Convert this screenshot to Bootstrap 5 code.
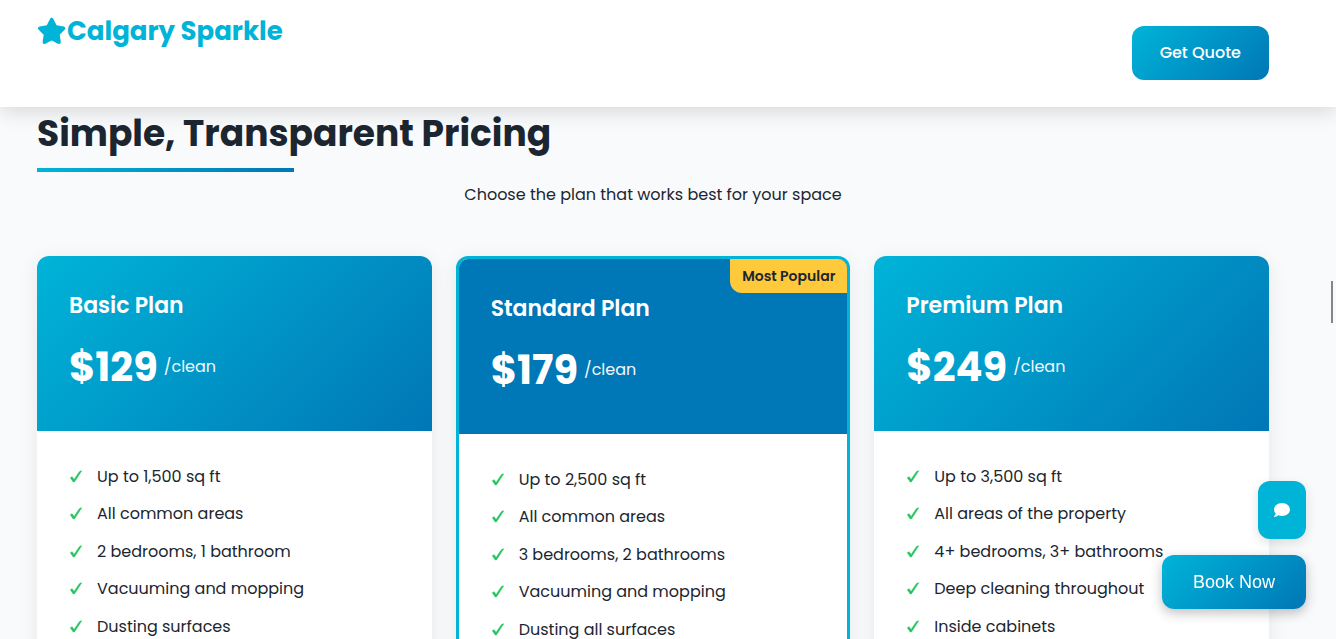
<!DOCTYPE html>
<html lang="en">
<head>
<meta charset="utf-8">
<meta name="viewport" content="width=device-width, initial-scale=1">
<title>Calgary Sparkle</title>
<link href="https://cdn.jsdelivr.net/npm/bootstrap@5.3.0/dist/css/bootstrap.min.css" rel="stylesheet">
<style>
:root { --aqua: #00b4d8; --deep: #0077b6; --ink: #1b2630; --grad: linear-gradient(135deg, var(--aqua), var(--deep)); }
body { font-family: Poppins, Inter, "Open Sans", sans-serif; font-size: 16px; line-height: 26px; color: var(--ink); background: #f9fafc; height: 100vh; overflow: hidden; }
.gutters { padding-left: 37px; padding-right: 67px; }
.site-header { background: #fff; padding-top: 16px; padding-bottom: 27px; box-shadow: 0 4px 20px rgba(0,0,0,.15); z-index: 5; }
.brand { color: var(--aqua); font-size: 26px; font-weight: 700; line-height: 30px; }
.grad-btn, .grad-btn:hover { background: var(--grad); color: #fff; border: 0; border-radius: 12px; }
.quote-btn { font-size: 16px; font-weight: 500; line-height: 22px; padding: 16px 28px; margin-top: 10px; }
.section-title { font-size: 36px; font-weight: 700; line-height: 44px; width: fit-content; margin: 5px 0 0; padding-bottom: 16px; }
.section-title::after { content: ""; position: absolute; left: 0; bottom: 0; width: 50%; height: 4px; background: var(--grad); }
.subtitle { padding-top: 10px; margin-bottom: 48px; }
.plan { height: 100%; background: #fff; border-radius: 12px; overflow: hidden; box-shadow: 0 4px 20px rgba(0,0,0,.08); }
.plan-top { background: var(--grad); color: #fff; padding: 32px; }
.plan-name { font-size: 22px; font-weight: 600; line-height: 35px; margin-bottom: 12px; }
.price { font-size: 40px; font-weight: 700; line-height: 64px; gap: 6px; }
.per { font-size: 16px; opacity: .95; }
.featured { border: 3px solid var(--aqua); }
.featured .plan-top { background: var(--deep); }
.popular { background: #ffc93c; color: var(--ink); font-size: 14px; font-weight: 600; line-height: 18px; padding: 8px 12px; border-radius: 0 0 0 12px; }
.features { padding: 33px 32px 32px; }
.features li { gap: 14px; padding-bottom: 12px; }
.features li:nth-child(odd) { padding-bottom: 11px; }
.tick { width: 14px; height: 14px; padding-bottom: 1px; fill: #22c55e; stroke: #22c55e; stroke-width: .5; flex: none; }
.floaters { right: 30px; bottom: 30px; z-index: 6; }
.chat-btn, .chat-btn:hover { background: var(--aqua); width: 48px; height: 58px; border: 0; border-radius: 12px; box-shadow: 0 4px 12px rgba(0,0,0,.12); }
.book-btn, .book-btn:hover { font: 18px/22px "Liberation Sans", Arial, sans-serif; padding: 16px 31px; box-shadow: 0 4px 12px rgba(0,0,0,.25); }
.scroll-mark { right: 3px; top: 281px; width: 2px; height: 42px; background: #858585; }
</style>
</head>
<body>
<svg class="d-none"><symbol id="tick" viewBox="0 0 14 14"><path d="M.8 8.3 2.9 7.2 4.9 10.200 10.200 2.300Q11.200 1 13.200.900L5.700 12.300Q5 13.400 4 12.900Z"/></symbol></svg>
<header class="site-header gutters position-relative d-flex justify-content-between align-items-start">
  <a href="#" class="brand d-flex align-items-center text-decoration-none">
    <svg width="30" height="28" viewBox="0 0 30 28" fill="currentColor" aria-hidden="true"><path d="M13 2Q14.700-1 16.400 2L19.600 8.300 26.700 9.400Q29.700 10.300 27.600 12.700L22.700 17.800 23.800 24.800Q23.800 27.800 21 26.800L14.700 23.500 8.300 26.800Q5.500 27.800 5.600 24.800L6.700 17.800 1.700 12.700Q-.3 10.300 2.700 9.400L9.800 8.300Z"/></svg>
    <span>Calgary Sparkle</span>
  </a>
  <button type="button" class="btn grad-btn quote-btn">Get Quote</button>
</header>
<main class="gutters">
  <h2 class="section-title position-relative">Simple, Transparent Pricing</h2>
  <p class="text-center subtitle">Choose the plan that works best for your space</p>
  <div class="row gx-4">
    <div class="col-4">
      <article class="plan">
        <div class="plan-top"><h3 class="plan-name">Basic Plan</h3><div class="price d-flex align-items-center"><span>$129</span><span class="per fw-normal">/clean</span></div></div>
        <ul class="features list-unstyled mb-0">
          <li class="d-flex align-items-center"><svg class="tick"><use href="#tick"/></svg>Up to 1,500 sq ft</li>
          <li class="d-flex align-items-center"><svg class="tick"><use href="#tick"/></svg>All common areas</li>
          <li class="d-flex align-items-center"><svg class="tick"><use href="#tick"/></svg>2 bedrooms, 1 bathroom</li>
          <li class="d-flex align-items-center"><svg class="tick"><use href="#tick"/></svg>Vacuuming and mopping</li>
          <li class="d-flex align-items-center"><svg class="tick"><use href="#tick"/></svg>Dusting surfaces</li>
        </ul>
      </article>
    </div>
    <div class="col-4">
      <article class="plan featured position-relative">
        <span class="popular position-absolute top-0 end-0">Most Popular</span>
        <div class="plan-top"><h3 class="plan-name">Standard Plan</h3><div class="price d-flex align-items-center"><span>$179</span><span class="per fw-normal">/clean</span></div></div>
        <ul class="features list-unstyled mb-0">
          <li class="d-flex align-items-center"><svg class="tick"><use href="#tick"/></svg>Up to 2,500 sq ft</li>
          <li class="d-flex align-items-center"><svg class="tick"><use href="#tick"/></svg>All common areas</li>
          <li class="d-flex align-items-center"><svg class="tick"><use href="#tick"/></svg>3 bedrooms, 2 bathrooms</li>
          <li class="d-flex align-items-center"><svg class="tick"><use href="#tick"/></svg>Vacuuming and mopping</li>
          <li class="d-flex align-items-center"><svg class="tick"><use href="#tick"/></svg>Dusting all surfaces</li>
        </ul>
      </article>
    </div>
    <div class="col-4">
      <article class="plan">
        <div class="plan-top"><h3 class="plan-name">Premium Plan</h3><div class="price d-flex align-items-center"><span>$249</span><span class="per fw-normal">/clean</span></div></div>
        <ul class="features list-unstyled mb-0">
          <li class="d-flex align-items-center"><svg class="tick"><use href="#tick"/></svg>Up to 3,500 sq ft</li>
          <li class="d-flex align-items-center"><svg class="tick"><use href="#tick"/></svg>All areas of the property</li>
          <li class="d-flex align-items-center"><svg class="tick"><use href="#tick"/></svg>4+ bedrooms, 3+ bathrooms</li>
          <li class="d-flex align-items-center"><svg class="tick"><use href="#tick"/></svg>Deep cleaning throughout</li>
          <li class="d-flex align-items-center"><svg class="tick"><use href="#tick"/></svg>Inside cabinets</li>
        </ul>
      </article>
    </div>
  </div>
</main>
<div class="floaters position-fixed d-flex flex-column align-items-end gap-3">
  <button type="button" class="btn chat-btn p-0 d-flex align-items-center justify-content-center" aria-label="Chat">
    <svg width="16" height="16" viewBox="0 0 16 16" fill="#fff" aria-hidden="true"><path d="M8 1C12.400 1 16 3.900 16 7.500S12.400 14 8 14Q6 14 4.300 13.300Q2.500 15 .5 15Q-.3 14.800.3 14Q1.500 12.700 1.700 11.500Q0 9.800 0 7.500C0 3.900 3.600 1 8 1Z"/></svg>
  </button>
  <button type="button" class="btn grad-btn book-btn">Book Now</button>
</div>
<div class="scroll-mark position-fixed" aria-hidden="true"></div>
<script src="https://cdn.jsdelivr.net/npm/bootstrap@5.3.0/dist/js/bootstrap.bundle.min.js"></script>
</body>
</html>
